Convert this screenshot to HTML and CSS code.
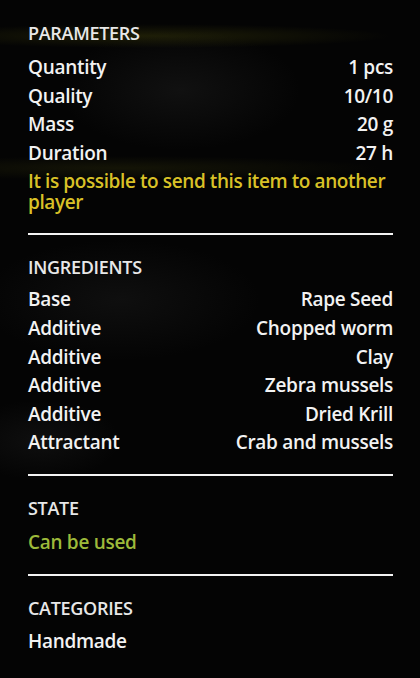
FILE: index.html
```html
<!DOCTYPE html>
<html lang="en">
<head>
  <meta charset="UTF-8" />
  <meta name="viewport" content="width=device-width, initial-scale=1.0"/>
  <title>Item info</title>
  <link rel="stylesheet" href="styles.css">
</head>
<body>
  <div class="painel">
    <!-- Parameters -->
    <div class="secao secao-param">
      <h3>PARAMETERS</h3>
      <div class="linha"><span>Quantity</span><span>1 pcs</span></div>
      <div class="linha"><span>Quality</span><span>10/10</span></div>
      <div class="linha"><span>Mass</span><span>20 g</span></div>
      <div class="linha"><span>Duration</span><span>27 h</span></div>
      <p class="aviso">It is possible to send this item to another player</p>
    </div>

    <!-- Ingredients -->
    <div class="secao secao-ingr">
      <h3>INGREDIENTS</h3>
      <div class="linha"><span>Base</span><span>Rape Seed</span></div>
      <div class="linha"><span>Additive</span><span>Chopped worm</span></div>
      <div class="linha"><span>Additive</span><span>Clay</span></div>
      <div class="linha"><span>Additive</span><span>Zebra mussels</span></div>
      <div class="linha"><span>Additive</span><span>Dried Krill</span></div>
      <div class="linha"><span>Attractant</span><span>Crab and mussels</span></div>
    </div>

    <!-- State -->
    <div class="secao secao-estado">
      <h3>STATE</h3>
      <p class="estado">Can be used</p>
    </div>

    <!-- Categories -->
    <div class="secao">
      <h3>CATEGORIES</h3>
      <p class="texto">Handmade</p>
    </div>
  </div>
</body>
</html>
```

FILE: styles.css
```css
* {
  box-sizing: border-box;
}

html, body {
  margin: 0;
  height: 100%;
  background: #040404;
  font-family: "Open Sans", Arial, sans-serif;
  color: #f2f2f2;
  overflow: hidden;
}

body {
  background:
    radial-gradient(ellipse 240px 12px at 150px 36px, rgba(60, 60, 10, 0.45), transparent),
    radial-gradient(ellipse 260px 12px at 120px 168px, rgba(50, 50, 10, 0.35), transparent),
    radial-gradient(ellipse 120px 60px at 180px 90px, rgba(40, 40, 40, 0.35), transparent),
    radial-gradient(ellipse 140px 60px at 120px 300px, rgba(40, 40, 40, 0.3), transparent),
    radial-gradient(ellipse 80px 40px at 40px 440px, rgba(35, 35, 35, 0.35), transparent),
    #040404;
}

.painel {
  padding: 19px 27px 0 28px;
}

.secao {
  border-bottom: 2px solid #f4f4f4;
  padding-bottom: 20px;
  margin-bottom: 18px;
}

.secao-param {
  padding-bottom: 20px;
}

.secao-param h3 {
  margin-bottom: 6px;
}

.secao-ingr {
  padding-bottom: 17px;
}

.secao-estado {
  padding-bottom: 17px;
}

.secao:last-child {
  border-bottom: none;
}

h3 {
  margin: 0 0 4px;
  font-size: 18px;
  font-weight: 600;
  line-height: 28px;
  letter-spacing: -0.3px;
  color: #e8e8e8;
}

.linha {
  display: flex;
  justify-content: space-between;
  font-size: 19px;
  font-weight: 600;
  line-height: 28.6px;
  letter-spacing: -0.3px;
}

.aviso {
  margin: 4px 0 0;
  font-size: 19px;
  font-weight: 600;
  line-height: 21px;
  letter-spacing: -0.4px;
  color: #d9c127;
}

.estado, .texto {
  margin: 0;
  padding-top: 1px;
  font-size: 19px;
  font-weight: 600;
  line-height: 28.6px;
  letter-spacing: -0.3px;
}

.estado {
  padding-top: 2px;
  color: #9dba3a;
}
```
